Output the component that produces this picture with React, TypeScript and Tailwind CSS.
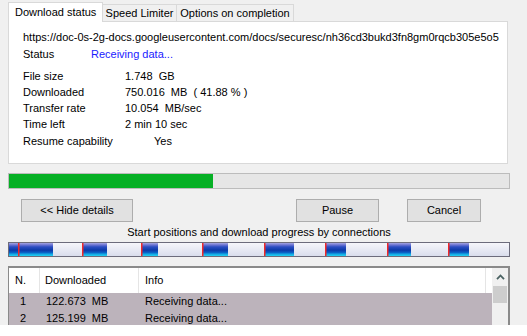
import React from "react";

const blue: [number, number][] = [
  [0, 44],
  [74, 98],
  [132, 149],
  [193, 219],
  [255, 285],
  [316, 337],
  [378, 402],
  [439, 460],
];
const reds = [9, 73, 132, 193, 255, 316, 378, 439];

function ConnBar() {
  return (
    <svg width="500" height="13" viewBox="0 0 500 13" className="block">
      <defs>
        <linearGradient id="bl" x1="0" y1="0" x2="0" y2="1">
          <stop offset="0" stopColor="#a4a4e2" />
          <stop offset="0.15" stopColor="#6c74d2" />
          <stop offset="0.3" stopColor="#2c4ec2" />
          <stop offset="0.55" stopColor="#0c3aa8" />
          <stop offset="0.72" stopColor="#0a5cc4" />
          <stop offset="0.85" stopColor="#12a4e2" />
          <stop offset="1" stopColor="#22d4f4" />
        </linearGradient>
        <linearGradient id="lt" x1="0" y1="0" x2="0" y2="1">
          <stop offset="0" stopColor="#f6f6fb" />
          <stop offset="0.5" stopColor="#e8eaf4" />
          <stop offset="1" stopColor="#d9ddec" />
        </linearGradient>
      </defs>
      <rect x="0" y="0" width="500" height="13" fill="url(#lt)" />
      {blue.map(([a, b], i) => (
        <rect key={i} x={a} y="0" width={b - a} height="13" fill="url(#bl)" />
      ))}
      {reds.map((r, i) => (
        <rect key={i} x={r} y="0" width="1.5" height="13" fill="#f02828" />
      ))}
    </svg>
  );
}

function Row({ label, children, valueClass = "" }: { label: string; children: React.ReactNode; valueClass?: string }) {
  return (
    <div className="flex h-[16px] leading-[16px]">
      <div className="w-[102px] shrink-0">{label}</div>
      <div className={"whitespace-pre " + valueClass}>{children}</div>
    </div>
  );
}

export default function App() {
  return (
    <div className="w-[527px] h-[336px] bg-white">
      <div className="h-[325px] bg-[#f0f0f0] overflow-hidden text-[11px] text-black font-['Liberation_Sans',Arial,sans-serif]">
        {/* Tabs */}
        <div className="flex items-end pl-[8px] pt-[2px] h-[21px]">
          <div className="relative z-10 mb-[-1px] h-[20px] w-[95px] bg-white border border-b-0 border-[#d9d9d9] flex items-center pl-[6px]">
            Download status
          </div>
          <div className="h-[17px] w-[74px] border-t border-r border-[#d9d9d9] flex items-center justify-center">
            Speed Limiter
          </div>
          <div className="h-[17px] w-[117px] border-t border-r border-[#d9d9d9] flex items-center justify-center">
            Options on completion
          </div>
        </div>
        {/* Panel */}
        <div className="ml-[8px] w-[500px] h-[143px] bg-white border border-[#d9d9d9] pl-[14px] pt-[7px]">
          <div className="h-[16px] leading-[16px] whitespace-nowrap">
            https://doc-0s-2g-docs.googleusercontent.com/docs/securesc/nh36cd3bukd3fn8gm0rqcb305e5o5
          </div>
          <div className="flex h-[16px] leading-[16px] mt-[1px]">
            <div className="w-[68px] shrink-0">Status</div>
            <div className="text-[#1a1aff]">Receiving data...</div>
          </div>
          <div className="mt-[6px]">
            <Row label="File size">{"1.748  GB"}</Row>
            <Row label="Downloaded">{"750.016  MB  ( 41.88 % )"}</Row>
            <Row label="Transfer rate">{"10.054  MB/sec"}</Row>
            <Row label="Time left">{"2 min 10 sec"}</Row>
            <div className="flex h-[16px] leading-[16px] mt-[1px]">
              <div className="w-[131px] shrink-0">Resume capability</div>
              <div>Yes</div>
            </div>
          </div>
        </div>
        {/* Progress */}
        <div className="ml-[8px] mt-[9px] w-[502px] h-[16px] border border-[#bcbcbc] bg-[#e6e6e6]">
          <div className="h-full w-[204px] bg-[#06b025]" />
        </div>
        {/* Buttons */}
        <div className="flex mt-[10px] h-[23px]">
          <button className="ml-[21px] w-[112px] h-[23px] bg-[#e1e1e1] border border-[#adadad] text-[11px]">
            {"<< Hide details"}
          </button>
          <button className="ml-[163px] w-[83px] h-[23px] bg-[#e1e1e1] border border-[#adadad] text-[11px]">
            Pause
          </button>
          <button className="ml-[28px] w-[74px] h-[23px] bg-[#e1e1e1] border border-[#adadad] text-[11px]">
            Cancel
          </button>
        </div>
        {/* Label */}
        <div className="ml-[8px] w-[502px] mt-[3px] h-[14px] leading-[14px] text-center">
          Start positions and download progress by connections
        </div>
        {/* Connection bar */}
        <div className="ml-[8px] mt-[3px] w-[502px] h-[15px] border border-[#6c6c7c]">
          <ConnBar />
        </div>
        {/* List */}
        <div className="ml-[8px] mt-[9px] w-[502px] h-[80px] border border-[#8a8a8a] border-t-2 border-r-2 flex">
          <div className="w-[483px] shrink-0">
            <div className="flex h-[25px] bg-white">
              <div className="w-[31px] h-full border-r border-[#e5e5e5] pl-[6px] flex items-center">N.</div>
              <div className="w-[99px] h-full border-r border-[#e5e5e5] pl-[5px] flex items-center">Downloaded</div>
              <div className="w-[347px] h-full border-r border-[#e5e5e5] pl-[6px] flex items-center">Info</div>
              <div className="flex-1" />
            </div>
            <div className="bg-[#bcb3bb] h-[60px]">
              {[
                ["1", "122.673  MB"],
                ["2", "125.199  MB"],
              ].map(([n, d]) => (
                <div key={n} className="flex h-[17px] leading-[17px]">
                  <div className="w-[31px] pl-[11px]">{n}</div>
                  <div className="w-[99px] pl-[6px] whitespace-pre">{d}</div>
                  <div className="pl-[6px]">Receiving data...</div>
                </div>
              ))}
            </div>
          </div>
          <div className="flex-1 bg-[#f0f0f0] flex flex-col">
            <div className="h-[18px] flex items-center justify-center">
              <svg width="9" height="6" viewBox="0 0 9 6">
                <path d="M1 5.2 L4.5 1.5 L8 5.2" fill="none" stroke="#4a6262" strokeWidth="1.8" />
              </svg>
            </div>
            <div className="mx-[1px] h-[17px] bg-[#cdcdcd]" />
          </div>
        </div>
      </div>
    </div>
  );
}
